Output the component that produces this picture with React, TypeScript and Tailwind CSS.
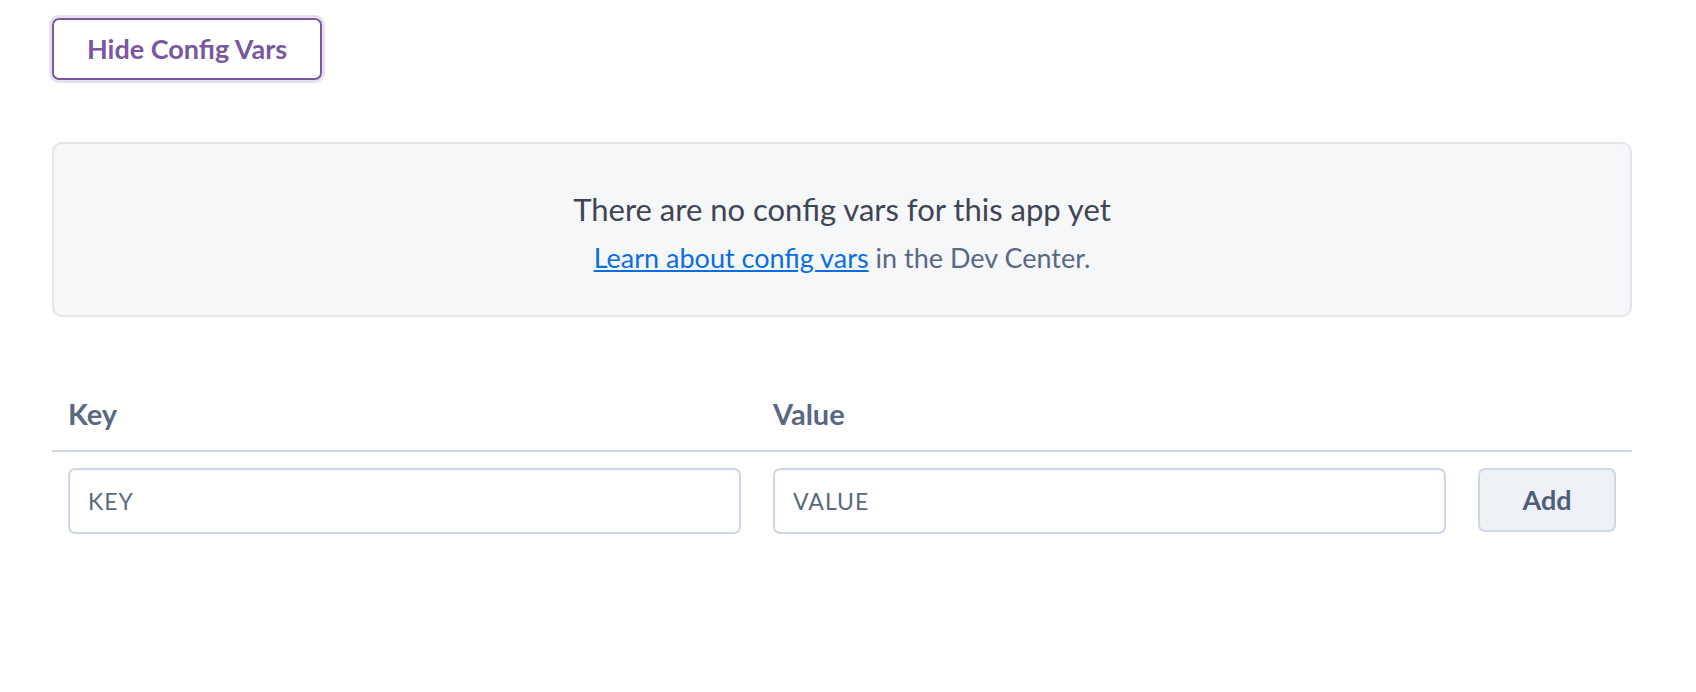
import React from "react";

export default function App() {
    return (
        <div className="min-h-[692px] bg-white px-[52px] pt-[18px] font-['Lato','Open_Sans',sans-serif]">
            <button className="flex h-[62px] w-[270px] items-center justify-center rounded-[7px] border-2 border-[#79589f] text-[27px] font-bold text-[#79589f] ring-[3px] ring-[#e6e0ef]">
                Hide Config Vars
            </button>

            <div className="mt-[62px] flex h-[175px] w-[1580px] flex-col items-center rounded-[10px] border-2 border-[#e3e5e9] bg-[#f6f7f9] pt-[46px]">
                <p className="text-[31px] leading-[38px] text-[#3f4552]">
                    There are no config vars for this app yet
                </p>
                <p className="mt-[14px] text-[27px] leading-[32px] text-[#596981]">
                    <a href="#" className="text-[#0a6ee2] underline">
                        Learn about config vars
                    </a>{" "}
                    in the Dev Center.
                </p>
            </div>

            <div className="mt-[71px] w-[1580px]">
                <div className="flex h-[64px] items-center border-b-2 border-[#cfd7e6] pb-[11px] text-[29px] font-bold text-[#596981]">
                    <div className="w-[705px] px-4">Key</div>
                    <div className="w-[705px] px-4">Value</div>
                    <div className="w-[170px] px-4"></div>
                </div>
                <div className="flex items-start pt-[16px]">
                    <div className="w-[705px] px-4">
                        <input
                            placeholder="KEY"
                            className="h-[66px] w-full rounded-[7px] border-2 border-[#cfd7e6] px-[18px] text-[23px] tracking-[1px] text-[#3f4552] shadow-[inset_0_1px_2px_rgba(0,0,0,0.05)] outline-none placeholder:text-[#596981]"
                        />
                    </div>
                    <div className="w-[705px] px-4">
                        <input
                            placeholder="VALUE"
                            className="h-[66px] w-full rounded-[7px] border-2 border-[#cfd7e6] px-[18px] text-[23px] tracking-[1px] text-[#3f4552] shadow-[inset_0_1px_2px_rgba(0,0,0,0.05)] outline-none placeholder:text-[#596981]"
                        />
                    </div>
                    <div className="w-[170px] px-4">
                        <button className="h-[64px] w-full rounded-[7px] border-2 border-[#cfd7e6] bg-[#eef1f6] text-[27px] font-bold text-[#4f5e78]">
                            Add
                        </button>
                    </div>
                </div>
            </div>
        </div>
    );
}
